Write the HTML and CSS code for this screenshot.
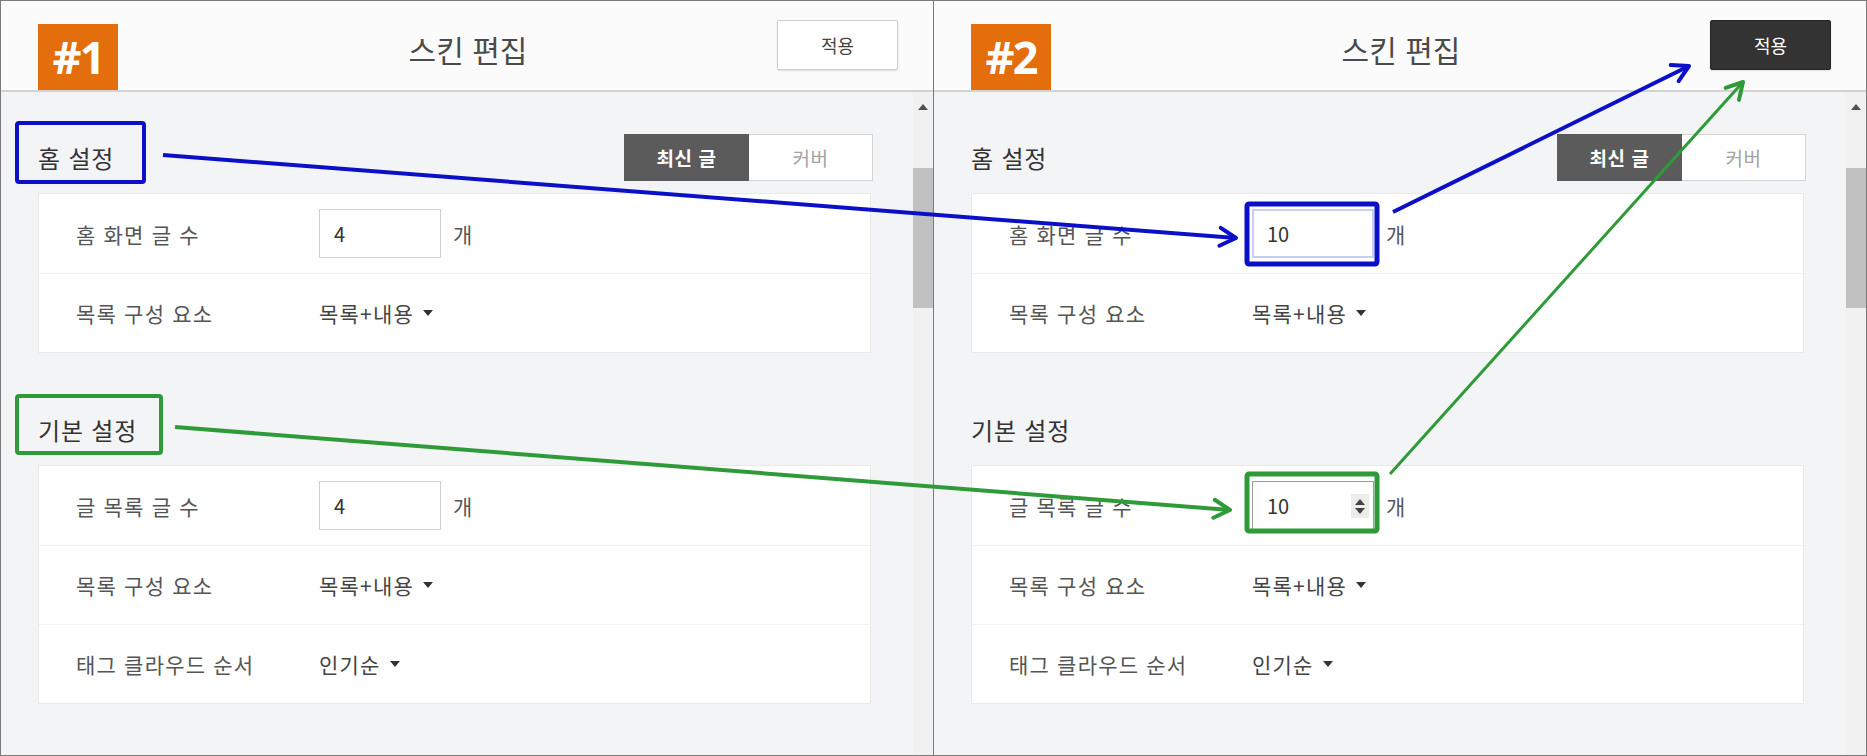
FILE: index.html
```html
<!DOCTYPE html>
<html lang="ko">
<head>
<meta charset="utf-8">
<title>스킨 편집</title>
<link rel="stylesheet" href="styles.css">
</head>
<body>
<div class="frame">
  <section class="panel panel-first">
    <header class="panel-head">
      <div class="badge">#1</div>
      <h1 class="title">스킨 편집</h1>
      <button class="apply">적용</button>
    </header>
    <div class="panel-body">
      <div class="content">
        <div class="sec-head">
          <h2 class="sec-title">홈 설정</h2>
          <div class="toggle"><span class="tg tg-on">최신 글</span><span class="tg tg-off">커버</span></div>
        </div>
        <div class="card">
          <div class="row"><span class="label">홈 화면 글 수</span><span class="value"><span class="field">4</span><span class="unit">개</span></span></div>
          <div class="row"><span class="label">목록 구성 요소</span><span class="value">목록+내용<i class="caret"></i></span></div>
        </div>
        <div class="sec-head sec-head-2">
          <h2 class="sec-title">기본 설정</h2>
        </div>
        <div class="card">
          <div class="row"><span class="label">글 목록 글 수</span><span class="value"><span class="field">4</span><span class="unit">개</span></span></div>
          <div class="row"><span class="label">목록 구성 요소</span><span class="value">목록+내용<i class="caret"></i></span></div>
          <div class="row"><span class="label">태그 클라우드 순서</span><span class="value">인기순<i class="caret"></i></span></div>
        </div>
      </div>
      <div class="scrollbar"><div class="sb-up"></div><div class="sb-thumb"></div></div>
    </div>
  </section>
  <section class="panel">
    <header class="panel-head">
      <div class="badge">#2</div>
      <h1 class="title">스킨 편집</h1>
      <button class="apply apply-dark">적용</button>
    </header>
    <div class="panel-body">
      <div class="content">
        <div class="sec-head">
          <h2 class="sec-title">홈 설정</h2>
          <div class="toggle"><span class="tg tg-on">최신 글</span><span class="tg tg-off">커버</span></div>
        </div>
        <div class="card">
          <div class="row"><span class="label">홈 화면 글 수</span><span class="value"><span class="field field-focus">10</span><span class="unit">개</span></span></div>
          <div class="row"><span class="label">목록 구성 요소</span><span class="value">목록+내용<i class="caret"></i></span></div>
        </div>
        <div class="sec-head sec-head-2">
          <h2 class="sec-title">기본 설정</h2>
        </div>
        <div class="card">
          <div class="row"><span class="label">글 목록 글 수</span><span class="value"><span class="field field-spin">10<span class="spin"><i class="spin-up"></i><i class="spin-down"></i></span></span><span class="unit">개</span></span></div>
          <div class="row"><span class="label">목록 구성 요소</span><span class="value">목록+내용<i class="caret"></i></span></div>
          <div class="row"><span class="label">태그 클라우드 순서</span><span class="value">인기순<i class="caret"></i></span></div>
        </div>
      </div>
      <div class="scrollbar"><div class="sb-up"></div><div class="sb-thumb"></div></div>
    </div>
  </section>

  <svg class="overlay" width="1867" height="756" viewBox="0 0 1867 756">
    <defs>
      <marker id="head-blue" viewBox="0 0 24 24" refX="21" refY="12" markerWidth="24" markerHeight="24" orient="auto" markerUnits="userSpaceOnUse">
        <path d="M5 3 L21 12 L5 21" fill="none" stroke="#0b10c8" stroke-width="4" stroke-linecap="round" stroke-linejoin="round"/>
      </marker>
      <marker id="head-green" viewBox="0 0 24 24" refX="21" refY="12" markerWidth="24" markerHeight="24" orient="auto" markerUnits="userSpaceOnUse">
        <path d="M5 3 L21 12 L5 21" fill="none" stroke="#2f9a38" stroke-width="4" stroke-linecap="round" stroke-linejoin="round"/>
      </marker>
    </defs>
    <rect x="17" y="123" width="127" height="59" rx="2" fill="none" stroke="#0b10c8" stroke-width="4"/>
    <rect x="17" y="396" width="144" height="57" rx="2" fill="none" stroke="#2f9a38" stroke-width="4"/>
    <rect x="1247" y="204" width="130" height="60" rx="2" fill="none" stroke="#0b10c8" stroke-width="5"/>
    <rect x="1247" y="474" width="130" height="57" rx="2" fill="none" stroke="#2f9a38" stroke-width="5"/>
    <line x1="163" y1="155" x2="1236" y2="238" stroke="#0b10c8" stroke-width="4" marker-end="url(#head-blue)"/>
    <line x1="1393" y1="212" x2="1689" y2="66" stroke="#0b10c8" stroke-width="4" marker-end="url(#head-blue)"/>
    <line x1="175" y1="427" x2="1230" y2="510" stroke="#2f9a38" stroke-width="4" marker-end="url(#head-green)"/>
    <line x1="1390" y1="474" x2="1743" y2="82" stroke="#2f9a38" stroke-width="3" marker-end="url(#head-green)"/>
  </svg>
</div>
</body>
</html>
```

FILE: styles.css
```css
* { box-sizing: border-box; }
html, body { margin: 0; padding: 0; background: #ffffff; }
body { font-family: "Noto Sans CJK KR", "Noto Sans", sans-serif; color: #333; }

.frame {
  position: relative;
  width: 1867px;
  height: 756px;
  border: 1px solid #7a7a7a;
  display: flex;
  overflow: hidden;
}

.panel {
  width: 932px;
  display: flex;
  flex-direction: column;
}
.panel-first {
  width: 933px;
  border-right: 1px solid #7a7a7a;
}

.panel-head {
  height: 91px;
  flex: none;
  background: #fbfbfb;
  border-bottom: 2px solid #d3d3d3;
  display: grid;
  grid-template-columns: 1fr auto 1fr;
  padding: 18px 35px 0 37px;
}
.badge {
  justify-self: start;
  align-self: end;
  width: 80px;
  height: 66px;
  background: #e46d0c;
  color: #fff;
  font-family: "Open Sans", "Liberation Sans", sans-serif;
  font-weight: 700;
  font-size: 45px;
  line-height: 66px;
  text-align: center;
  letter-spacing: -2px;
}
.title {
  margin: 0;
  align-self: start;
  margin-top: 10px;
  font-size: 30px;
  font-weight: 400;
  color: #4a4a4a;
  line-height: 40px;
}
.apply {
  justify-self: end;
  align-self: start;
  margin-top: 1px;
  width: 121px;
  height: 50px;
  background: #fff;
  border: 1px solid #cfcfcf;
  border-radius: 2px;
  box-shadow: 0 1px 2px rgba(0,0,0,0.12);
  font-family: "Noto Sans CJK KR", sans-serif;
  font-size: 18px;
  color: #444;
  padding: 0;
}
.apply-dark {
  background: #333333;
  border-color: #262626;
  color: #fff;
}

.panel-body {
  flex: 1;
  display: flex;
  background: #f3f4f6;
  min-height: 0;
}
.content {
  flex: 1;
  padding: 42px 40px 0 37px;
}
.scrollbar {
  width: 20px;
  flex: none;
  background: #f1f1f1;
  display: flex;
  flex-direction: column;
  align-items: center;
}
.sb-up {
  width: 0;
  height: 0;
  margin-top: 12px;
  border-left: 5px solid transparent;
  border-right: 5px solid transparent;
  border-bottom: 6px solid #505050;
}
.sb-thumb {
  margin-top: 58px;
  width: 20px;
  height: 140px;
  background: #c1c1c1;
}

.sec-head {
  height: 47px;
  display: flex;
  align-items: center;
  justify-content: space-between;
}
.sec-head-2 { margin-top: 53px; }
.sec-title {
  margin: 0;
  font-size: 24px;
  font-weight: 400;
  letter-spacing: 0.8px;
  color: #333;
}
.toggle {
  display: flex;
  height: 47px;
}
.tg {
  width: 125px;
  display: flex;
  align-items: center;
  justify-content: center;
  font-size: 19px;
  letter-spacing: 0.5px;
}
.tg-on {
  background: #5b5b5b;
  color: #fff;
  font-weight: 700;
}
.tg-off {
  width: 124px;
  background: #fff;
  border: 1px solid #d4d4d4;
  border-left: none;
  color: #a3a3a3;
}

.card {
  margin-top: 12px;
  margin-right: 2px;
  background: #fff;
  border: 1px solid #e9e9e9;
}
.row {
  height: 79px;
  display: grid;
  grid-template-columns: 243px auto;
  align-items: center;
  padding-left: 37px;
  border-top: 1px solid #f1f1f1;
  font-size: 21px;
  letter-spacing: 1.2px;
  color: #555;
}
.row:first-child { border-top: none; }
.label { color: #555; }
.value {
  display: flex;
  align-items: center;
  color: #444;
}
.field {
  position: relative;
  width: 122px;
  height: 49px;
  border: 1px solid #d0d0d0;
  background: #fff;
  padding-left: 14px;
  line-height: 47px;
  color: #333;
  font-size: 20px;
  letter-spacing: 0;
}
.field-focus {
  border: 2px solid #c9cdf4;
  padding-left: 13px;
  line-height: 45px;
}
.field-spin {
  border-color: #9a9a9a;
}
.spin {
  position: absolute;
  right: 4px;
  top: 12px;
  width: 18px;
  height: 24px;
  background: #ececec;
  display: flex;
  flex-direction: column;
  align-items: center;
  justify-content: center;
  gap: 3px;
}
.spin-up, .spin-down {
  width: 0;
  height: 0;
  border-left: 5px solid transparent;
  border-right: 5px solid transparent;
}
.spin-up { border-bottom: 6px solid #444; }
.spin-down { border-top: 6px solid #444; }
.unit {
  margin-left: 12px;
  color: #555;
}
.caret {
  display: inline-block;
  width: 0;
  height: 0;
  margin-left: 9px;
  border-left: 5px solid transparent;
  border-right: 5px solid transparent;
  border-top: 6px solid #333;
}

.overlay {
  position: absolute;
  left: -1px;
  top: -1px;
  pointer-events: none;
}
```
